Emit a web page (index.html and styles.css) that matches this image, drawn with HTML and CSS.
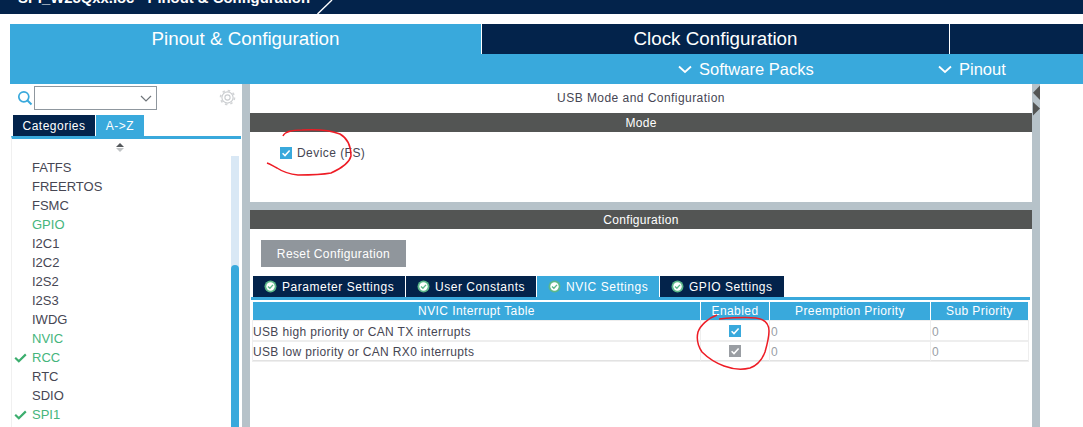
FILE: index.html
```html
<!DOCTYPE html>
<html lang="en">
<head>
<meta charset="utf-8">
<title>USB Mode and Configuration</title>
<link rel="stylesheet" href="styles.css">
</head>
<body>
<header class="titlebar">
  <span class="crumb">SPI_W25Qxx.ioc - Pinout &amp; Configuration</span>
  <svg class="slash" width="16" height="14" viewBox="0 0 16 14"><path d="M15 0 L0.500 14" stroke="#fff" stroke-width="1.4" fill="none"/></svg>
</header>
<div class="app">
  <nav class="topnav">
    <div class="tab-main active">Pinout &amp; Configuration</div>
    <div class="right-nav">
      <div class="tab-row">
        <div class="tab-main clock">Clock Configuration</div>
        <div class="tab-main rest"></div>
      </div>
      <div class="sub-row">
        <div class="sub sub-packs"><svg width="14" height="9" viewBox="0 0 14 9"><path d="M1 1.500 L7 7 L13 1.500" stroke="#fff" stroke-width="1.8" fill="none"/></svg>Software Packs</div>
        <div class="sub sub-pinout"><svg width="14" height="9" viewBox="0 0 14 9"><path d="M1 1.500 L7 7 L13 1.500" stroke="#fff" stroke-width="1.8" fill="none"/></svg>Pinout</div>
      </div>
    </div>
  </nav>
  <div class="workspace">
    <aside class="side">
      <div class="search">
        <svg class="search-icon" width="16" height="16" viewBox="0 0 16 16"><circle cx="6.800" cy="6.800" r="5" stroke="#39a9dc" stroke-width="1.700" fill="none"/><path d="M10.500 10.500 L14.500 14.500" stroke="#39a9dc" stroke-width="2" fill="none"/></svg>
        <div class="select"><svg width="12" height="7" viewBox="0 0 12 7"><path d="M1 1 L6 6 L11 1" stroke="#6f757a" stroke-width="1.200" fill="none"/></svg></div>
        <svg class="gear" width="17" height="17" viewBox="0 0 17 17"><circle cx="8.500" cy="8.500" r="7" stroke="#d2d4d6" stroke-width="1.600" stroke-dasharray="2.500 3" fill="none"/><circle cx="8.500" cy="8.500" r="5.600" stroke="#c9cccf" stroke-width="1.100" fill="#fff"/><circle cx="8.500" cy="8.500" r="2.600" stroke="#c9cccf" stroke-width="1.100" fill="none"/></svg>
      </div>
      <div class="side-tabs">
        <div class="stab navy">Categories</div>
        <div class="stab blue">A-&gt;Z</div>
      </div>
      <div class="list-box">
        <div class="sort"><i class="up"></i><i class="down"></i></div>
        <div class="list-wrap">
          <ul class="list">
            <li>FATFS</li>
            <li>FREERTOS</li>
            <li>FSMC</li>
            <li class="on">GPIO</li>
            <li>I2C1</li>
            <li>I2C2</li>
            <li>I2S2</li>
            <li>I2S3</li>
            <li>IWDG</li>
            <li class="on">NVIC</li>
            <li class="on"><svg class="tick" width="13" height="10" viewBox="0 0 13 10"><path d="M1.200 4.800 L4.800 8.200 L11.800 1.400" stroke="#3cae6e" stroke-width="2.200" fill="none"/></svg>RCC</li>
            <li>RTC</li>
            <li>SDIO</li>
            <li class="on"><svg class="tick" width="13" height="10" viewBox="0 0 13 10"><path d="M1.200 4.800 L4.800 8.200 L11.800 1.400" stroke="#3cae6e" stroke-width="2.200" fill="none"/></svg>SPI1</li>
          </ul>
          <div class="scroll"><div class="thumb"></div></div>
        </div>
      </div>
    </aside>
    <div class="divider"></div>
    <main class="panel">
      <section class="mode">
        <h2 class="panel-title">USB Mode and Configuration</h2>
        <div class="bar">Mode</div>
        <label class="device"><span class="check"><svg width="12" height="12" viewBox="0 0 12 12"><path d="M2.600 6.200 L5 8.600 L9.600 3.400" stroke="#fff" stroke-width="1.500" fill="none"/></svg></span>Device (FS)</label>
      </section>
      <section class="config">
        <div class="bar">Configuration</div>
        <button class="reset" type="button">Reset Configuration</button>
        <div class="ctabs">
          <div class="ctab t1"><svg class="ok" width="13" height="13" viewBox="0 0 13 13"><circle cx="6.500" cy="6.500" r="6" fill="#5cb88a"/><circle cx="6.500" cy="6.500" r="4.200" fill="#fff"/><path d="M4 6.500 L5.900 8.300 L9 4.900" stroke="#5cb88a" stroke-width="1.400" fill="none"/></svg>Parameter Settings</div>
          <div class="ctab t2"><svg class="ok" width="13" height="13" viewBox="0 0 13 13"><circle cx="6.500" cy="6.500" r="6" fill="#5cb88a"/><circle cx="6.500" cy="6.500" r="4.200" fill="#fff"/><path d="M4 6.500 L5.900 8.300 L9 4.900" stroke="#5cb88a" stroke-width="1.400" fill="none"/></svg>User Constants</div>
          <div class="ctab t3 sel"><svg class="ok" width="13" height="13" viewBox="0 0 13 13"><circle cx="6.500" cy="6.500" r="6" fill="#5cb88a"/><circle cx="6.500" cy="6.500" r="4.200" fill="#fff"/><path d="M4 6.500 L5.900 8.300 L9 4.900" stroke="#5cb88a" stroke-width="1.400" fill="none"/></svg>NVIC Settings</div>
          <div class="ctab t4"><svg class="ok" width="13" height="13" viewBox="0 0 13 13"><circle cx="6.500" cy="6.500" r="6" fill="#5cb88a"/><circle cx="6.500" cy="6.500" r="4.200" fill="#fff"/><path d="M4 6.500 L5.900 8.300 L9 4.900" stroke="#5cb88a" stroke-width="1.400" fill="none"/></svg>GPIO Settings</div>
        </div>
        <div class="table">
          <div class="th">NVIC Interrupt Table</div>
          <div class="th">Enabled</div>
          <div class="th">Preemption Priority</div>
          <div class="th">Sub Priority</div>
          <div class="td name">USB high priority or CAN TX interrupts</div>
          <div class="td mid"><span class="check"><svg width="12" height="12" viewBox="0 0 12 12"><path d="M2.600 6.200 L5 8.600 L9.600 3.400" stroke="#fff" stroke-width="1.500" fill="none"/></svg></span></div>
          <div class="td num">0</div>
          <div class="td num">0</div>
          <div class="td name">USB low priority or CAN RX0 interrupts</div>
          <div class="td mid"><span class="check off"><svg width="12" height="12" viewBox="0 0 12 12"><path d="M2.600 6.200 L5 8.600 L9.600 3.400" stroke="#fff" stroke-width="1.500" fill="none"/></svg></span></div>
          <div class="td num">0</div>
          <div class="td num">0</div>
        </div>
      </section>
    </main>
    <div class="divider arrows">
      <svg width="8" height="31" viewBox="0 0 8 31"><path d="M8 0.500 L8 15 L1 7.800 Z" fill="#535554"/><path d="M1 17 L8 23.500 L1 30.500 Z" fill="#535554"/></svg>
    </div>
    <div class="outer"></div>
  </div>
</div>
<svg class="scribble" width="1083" height="427" viewBox="0 0 1083 427">
  <path d="M283 136 C285 131 292 130 302 130 C318 129 330 130 340 134 C347 138 351 145 351 156 C349 164 340 169 331 173 C320 175 308 175 298 175 C288 174 283 172 277 168 C273 166 270 164 267 163" stroke="#ee1c25" stroke-width="1.500" fill="none"/>
  <path d="M719 319 C730 318 745 317 756 318 C764 319 769 323 769 331 C769 338 767 345 765 352 C762 360 758 365 750 368 C742 370 732 369 724 366 C716 363 708 358 702 352 C698 346 696 340 698 332 C700 326 708 318 717 315" stroke="#ee1c25" stroke-width="1.500" fill="none"/>
</svg>
</body>
</html>
```

FILE: styles.css
```css
* { box-sizing: border-box; }
html, body { margin: 0; padding: 0; height: 427px; overflow: hidden; background: #fff; }
body { position: relative; font-family: "Liberation Sans", Arial, sans-serif; color: #464653; font-size: 13px; }

.titlebar { height: 14px; background: #03234b; display: flex; align-items: flex-end; overflow: hidden; padding-left: 18px; }
.crumb { color: #fff; font-weight: bold; font-size: 14.850px; line-height: 16px; margin-bottom: 8px; white-space: nowrap; flex: none; }
.slash { margin-left: 7px; flex: none; }

.app { margin: 10px 0 0 10px; }
.topnav { display: flex; height: 60px; color: #fff; }
.tab-main { height: 30px; font-size: 18.800px; line-height: 30px; text-align: center; }
.active { width: 471px; height: 60px; background: #39a9dc; flex: none; }
.right-nav { flex: 1; }
.tab-row { display: flex; height: 30px; background: #03234b; }
.clock { width: 469px; border-left: 1px solid #fff; border-right: 1px solid #fff; }
.rest { flex: 1; }
.sub-row { height: 30px; background: #39a9dc; display: flex; }
.sub { font-size: 16.500px; line-height: 30px; display: flex; align-items: center; gap: 7px; }
.sub-packs { margin-left: 197px; width: 260px; }

.workspace { display: grid; grid-template-columns: 232px 8px 782px 8px 1fr; height: 343px; }

.side { background: #fff; display: flex; flex-direction: column; overflow: hidden; }
.search { display: flex; align-items: flex-start; height: 31px; padding: 2px 0 0 7px; }
.search-icon { flex: none; margin-top: 4px; }
.select { width: 123px; height: 24px; margin-left: 1px; border: 1px solid #8f979e; display: flex; align-items: center; justify-content: flex-end; padding-right: 4px; }
.gear { margin-left: 62px; flex: none; margin-top: 3px; }
.side-tabs { display: flex; gap: 1px; padding-left: 3px; height: 21px; }
.stab { color: #fff; font-size: 12px; line-height: 22px; letter-spacing: .5px; text-align: center; }
.navy { background: #03234b; width: 82px; }
.blue { background: #39a9dc; width: 48px; }
.list-box { margin-left: 1px; width: 230px; border-top: 3px solid #39a9dc; border-left: 1.500px solid #f0f0f0; flex: 1; overflow: hidden; }
.sort { height: 17px; display: flex; flex-direction: column; align-items: center; padding-top: 4px; gap: 1px; margin-right: 13px; }
.up { width: 0; height: 0; border: 4px solid transparent; border-top: 0; border-bottom: 4px solid #55595c; }
.down { width: 0; height: 0; border: 4px solid transparent; border-bottom: 0; border-top: 4px solid #c0c3c5; }
.list-wrap { display: flex; justify-content: space-between; padding-right: 2px; }
.list { list-style: none; margin: 0; padding: 2px 0 0 0; flex: 1; }
.list li { height: 19px; line-height: 19px; padding-left: 20px; position: relative; white-space: nowrap; }
.list .on { color: #45b57c; }
.tick { position: absolute; left: 2px; top: 5px; }
.scroll { width: 8px; height: 280px; background: #d9e8f5; padding-top: 109px; }
.thumb { height: 171px; background: #39a9dc; border-radius: 4px 4px 0 0; }

.divider { background: #b6c2c9; }
.arrows { line-height: 0; padding-top: 1px; }

.panel { display: flex; flex-direction: column; background: #b6c2c9; gap: 8px; min-width: 0; }
.mode { height: 118px; background: #fff; }
.panel-title { margin: 0; height: 29px; font-size: 12px; font-weight: normal; line-height: 29px; text-align: center; letter-spacing: .45px; }
.bar { height: 19px; background: #535554; color: #fff; font-size: 12px; line-height: 21px; text-align: center; letter-spacing: .3px; }
.device { display: flex; align-items: center; height: 19px; margin: 11px 0 0 30px; gap: 5px; font-size: 12px; letter-spacing: .45px; }
.check { width: 12px; height: 12px; background: #39a9dc; display: block; line-height: 0; }
.check.off { background: #9a9ea3; }

.config { flex: 1; background: #fff; display: flex; flex-direction: column; }
.reset { align-self: flex-start; width: 145px; height: 27px; margin: 11px 0 0 11px; background: #90969c; border: 0; color: #fff; font: 12px/28px "Liberation Sans", Arial, sans-serif; letter-spacing: .38px; padding: 0; }
.ctabs { display: flex; gap: 1px; margin: 9px 0 0 1px; padding: 0 2px; height: 24px; width: 779px; border-bottom: 3px solid #39a9dc; }
.ctab { background: #03234b; color: #fff; font-size: 12px; line-height: 22px; letter-spacing: .53px; display: flex; align-items: center; gap: 5px; padding-left: 11px; }
.ctab.sel { background: #39a9dc; }
.t1 { width: 152px; }
.t2 { width: 130px; }
.t3 { width: 122px; }
.t4 { width: 124px; }
.ok { flex: none; }

.table { display: grid; grid-template-columns: 447px 68px 160px 97px; column-gap: 1px; margin: 2px 0 0 3px; width: 775px; }
.th { height: 19px; background: #39a9dc; color: #fff; font-size: 12px; line-height: 19px; text-align: center; letter-spacing: .42px; }
.td { height: 20px; border-bottom: 1.500px solid #e2e2e2; font-size: 12px; line-height: 23px; letter-spacing: .35px; white-space: nowrap; outline: .5px solid #eee; }
.mid { display: flex; align-items: center; justify-content: center; }
.num { color: #9aa0a6; padding-left: 1px; letter-spacing: 0; }

.outer { background: #fff; }

.scribble { position: absolute; left: 0; top: 0; pointer-events: none; }
```
